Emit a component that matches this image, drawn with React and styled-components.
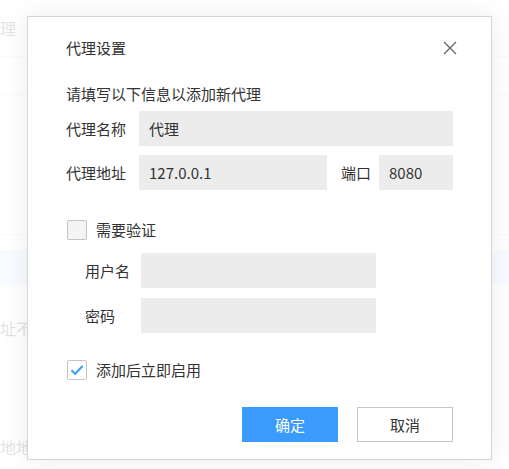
import React, { useState } from "react";
import styled, { createGlobalStyle } from "styled-components";

const GlobalStyle = createGlobalStyle`
  html, body {
    margin: 0;
    padding: 0;
    background: #ffffff;
    font-family: "Noto Sans CJK SC", "Open Sans", sans-serif;
  }
  * { box-sizing: border-box; }
`;

const Page = styled.div`
  position: relative;
  width: 509px;
  height: 469px;
  overflow: hidden;
  background: #ffffff;
`;

const BgList = styled.div`
  display: flex;
  flex-direction: column;
  color: #333;
  font-size: 16px;
`;

const BgRow = styled.div`
  height: ${(p) => p.h}px;
  display: flex;
  align-items: center;
  border-bottom: ${(p) => (p.line ? "1px solid #d8d8d8" : "none")};
  background: ${(p) => (p.active ? "#cfe3fb" : "transparent")};
  margin-left: -16px;
  white-space: nowrap;
`;

const Mask = styled.div`
  position: absolute;
  inset: 0;
  background: rgba(255, 255, 255, 0.86);
`;

const Dialog = styled.div`
  position: absolute;
  left: 27px;
  top: 16px;
  width: 465px;
  height: 444px;
  background: #fff;
  border: 1px solid #d6d6d6;
  box-shadow: 0 0 24px rgba(0, 0, 0, 0.08);
  padding: 0 38px;
  display: flex;
  flex-direction: column;
  color: #333;
  font-size: 15px;
`;

const Header = styled.div`
  display: flex;
  justify-content: space-between;
  align-items: center;
  height: 60px;
  padding-top: 2px;
`;

const Title = styled.div`
  font-size: 15px;
  line-height: 20px;
  color: #333;
`;

const Close = styled.button`
  border: none;
  background: none;
  padding: 0;
  margin-right: -5px;
  width: 16px;
  height: 16px;
  display: flex;
  align-items: center;
  justify-content: center;
  cursor: pointer;
`;

const Intro = styled.div`
  line-height: 20px;
  margin-top: 7px;
  margin-bottom: 7px;
`;

const FormRow = styled.div`
  display: grid;
  grid-template-columns: ${(p) => p.cols};
  align-items: center;
  height: 35px;
  margin-bottom: ${(p) => p.mb ?? 9}px;
  padding-left: ${(p) => p.indent || 0}px;
`;

const Label = styled.span`
  line-height: 20px;
  white-space: nowrap;
  padding-left: ${(p) => p.pl || 0}px;
`;

const Input = styled.input`
  height: 35px;
  width: 100%;
  border: none;
  outline: none;
  background: #ececec;
  padding: 0 10px;
  font-family: "Noto Sans CJK SC", "Open Sans", sans-serif;
  font-size: 15px;
  color: #333;
`;

const CheckRow = styled.label`
  display: flex;
  align-items: center;
  gap: 9px;
  margin-top: ${(p) => p.mt}px;
  margin-bottom: ${(p) => p.mb}px;
  padding-left: 1px;
  line-height: 20px;
  cursor: pointer;
`;

const Box = styled.span`
  width: 20px;
  height: 20px;
  border: 1px solid #c4c4c4;
  border-radius: 2px;
  background: ${(p) => (p.checked ? "#fff" : "#f4f4f4")};
  display: flex;
  align-items: center;
  justify-content: center;
`;

const Actions = styled.div`
  display: flex;
  justify-content: flex-end;
  gap: 19px;
`;

const Button = styled.button`
  width: 96px;
  height: 35px;
  font-family: "Noto Sans CJK SC", sans-serif;
  font-size: 15px;
  cursor: pointer;
  border: 1px solid ${(p) => (p.primary ? "#3a9bfc" : "#c4c4c4")};
  background: ${(p) => (p.primary ? "#3a9bfc" : "#fff")};
  color: ${(p) => (p.primary ? "#fff" : "#333")};
`;

const Checkbox = ({ checked, label, mt, mb, onToggle }) => (
  <CheckRow mt={mt} mb={mb} onClick={onToggle}>
    <Box checked={checked}>
      {checked && (
        <svg width="14" height="12" viewBox="0 0 14 12">
          <path d="M1.5 6.2 L5.2 9.8 L12.6 2" fill="none" stroke="#3a9bfc" strokeWidth="2" />
        </svg>
      )}
    </Box>
    <span>{label}</span>
  </CheckRow>
);

export default function App() {
  const [auth, setAuth] = useState(false);
  const [enable, setEnable] = useState(true);

  return (
    <Page>
      <GlobalStyle />
      <BgList>
        <BgRow h={57} line>代理</BgRow>
        <BgRow h={38} line />
        <BgRow h={140} line />
        <BgRow h={15} />
        <BgRow h={35} active>理</BgRow>
        <BgRow h={86}>地址不</BgRow>
        <BgRow h={152}>地地地</BgRow>
      </BgList>
      <Mask />
      <Dialog>
        <Header>
          <Title>代理设置</Title>
          <Close aria-label="close">
            <svg width="14" height="14" viewBox="0 0 14 14">
              <path d="M1 1 L13 13 M13 1 L1 13" stroke="#666" strokeWidth="1.3" />
            </svg>
          </Close>
        </Header>
        <Intro>请填写以下信息以添加新代理</Intro>
        <FormRow cols="73px 1fr">
          <Label>代理名称</Label>
          <Input defaultValue="代理" />
        </FormRow>
        <FormRow cols="73px 188px 52px 74px">
          <Label>代理地址</Label>
          <Input defaultValue="127.0.0.1" />
          <Label pl={14}>端口</Label>
          <Input defaultValue="8080" />
        </FormRow>
        <Checkbox
          checked={auth}
          label="需要验证"
          mt={21}
          mb={13}
          onToggle={() => setAuth(!auth)}
        />
        <FormRow cols="56px 235px" indent={19} mb={10}>
          <Label>用户名</Label>
          <Input />
        </FormRow>
        <FormRow cols="56px 235px" indent={19}>
          <Label>密码</Label>
          <Input type="password" />
        </FormRow>
        <Checkbox
          checked={enable}
          label="添加后立即启用"
          mt={18}
          mb={27}
          onToggle={() => setEnable(!enable)}
        />
        <Actions>
          <Button primary>确定</Button>
          <Button>取消</Button>
        </Actions>
      </Dialog>
    </Page>
  );
}
